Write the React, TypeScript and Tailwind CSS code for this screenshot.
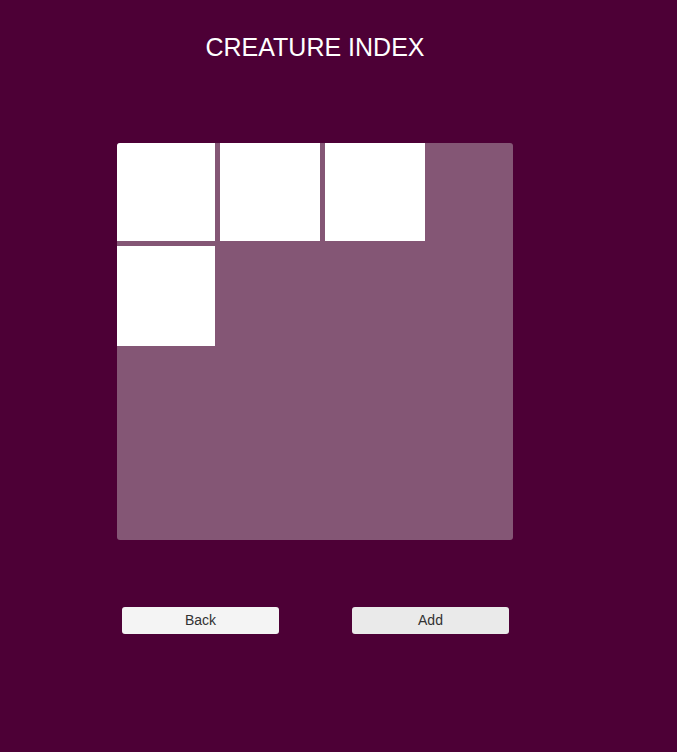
import React from "react";

const creatures = [1, 2, 3, 4];

export default function App() {
  return (
    <div className="min-h-[752px] w-full bg-[#4d0036] font-['Liberation_Sans',Arial,sans-serif]">
      <div className="ml-[117px] w-[396px] flex flex-col">
        <h1 className="pt-[33px] text-center text-[25px] leading-[28px] text-white">CREATURE INDEX</h1>

        <div className="mt-[82px] h-[397px] w-[396px] overflow-hidden rounded-[3px] bg-[#845675]">
          <div className="-ml-[2px] -mt-[2px] grid grid-cols-[repeat(3,100px)] gap-[5px]">
            {creatures.map((c) => (
              <div key={c} className="h-[100px] w-[100px] bg-white" />
            ))}
          </div>
        </div>

        <div className="mt-[67px] flex gap-[73px] pl-[5px]">
          <button className="h-[27px] w-[157px] rounded-[3px] bg-[#f4f4f4] text-[14px] text-[#323232]">
            Back
          </button>
          <button className="h-[27px] w-[157px] rounded-[3px] bg-[#eaeaea] text-[14px] text-[#323232]">
            Add
          </button>
        </div>
      </div>
    </div>
  );
}
